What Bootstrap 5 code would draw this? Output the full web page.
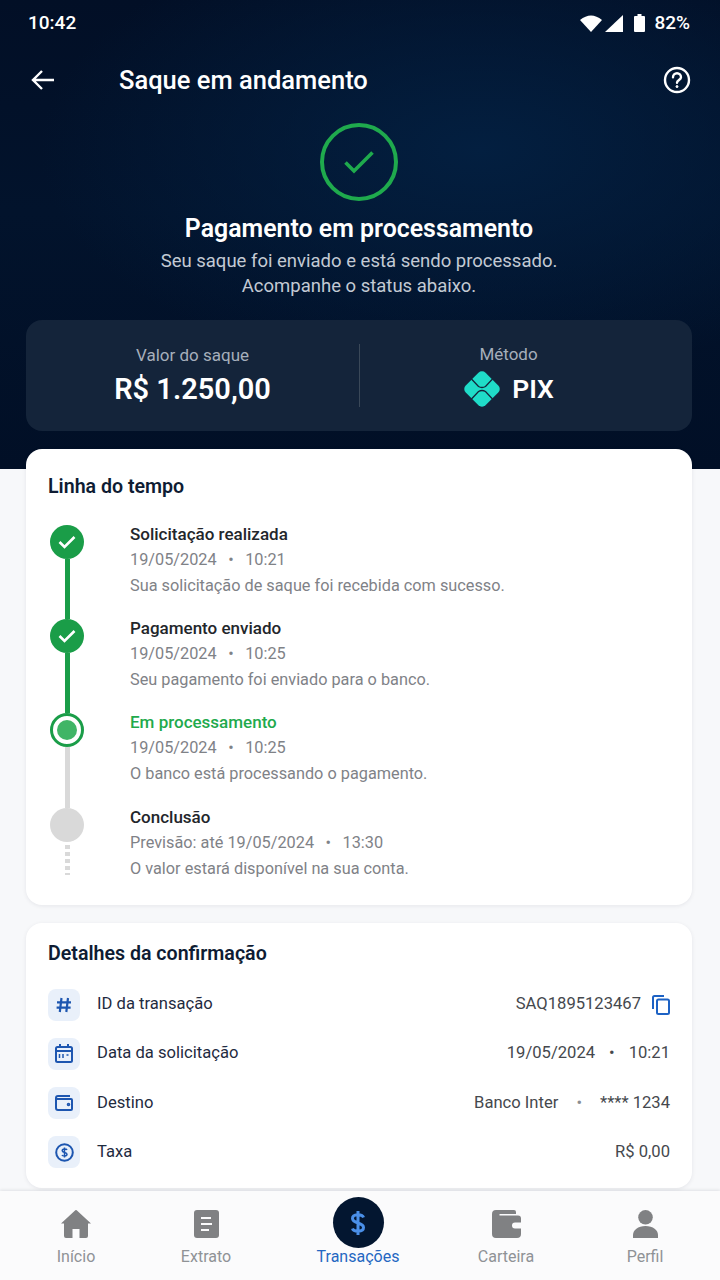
<!DOCTYPE html>
<html lang="pt-BR">
<head>
  <meta charset="utf-8">
  <meta name="viewport" content="width=device-width">
  <title>Saque em andamento</title>
  <link href="https://cdn.jsdelivr.net/npm/bootstrap@5.3.2/dist/css/bootstrap.min.css" rel="stylesheet" type="text/css" />
  <style>
    body { font-family: Roboto, "Liberation Sans", sans-serif; background: #f7f8fa; height: 1280px; overflow: hidden; }
    .hero-area { height: 469px; color: #fff; padding: 0 28px 0 26px;
      background: radial-gradient(ellipse 440px 230px at 480px 150px, #031f40 0%, rgba(3,28,56,0) 100%), linear-gradient(180deg, #020f26 0%, #02132c 45%, #010f26 100%); }
    .status-row { height: 46px; font-size: 19px; font-weight: 500; }
    .status-time { margin-left: 2px; }
    .status-icons { gap: 3px; margin-right: 2px; }
    .status-pct { margin-left: 6px; }
    .top-row { height: 48px; margin-top: 10px; }
    .top-title { font-size: 25.5px; font-weight: 500; margin-left: 64px; }
    .help-icon { margin-right: 1px; }
    .check-ring { width: 78px; height: 78px; border: 4px solid #1faa4d; border-radius: 50%; margin-top: 19px; }
    .hero-title { font-size: 24.9px; font-weight: 600; line-height: 30px; margin-top: 13px; }
    .hero-sub { font-size: 18.5px; line-height: 25px; color: #c3cad4; margin-top: 5px; }
    .amount-box { background: #14243a; border-radius: 16px; height: 111px; margin-top: 21px; }
    .amount-col { width: 333px; }
    .amount-split { height: 63px; border-left: 1px solid #3a4858; padding-right: 35px; }
    .amount-label { font-size: 17px; line-height: 20px; color: #a6afbb; }
    .amount-value { font-size: 29px; font-weight: 600; line-height: 34px; margin-top: 7px; }
    .pix-value { font-size: 26.5px; margin-top: 6px; gap: 11px; }
    .sheet { margin: -20px 28px 0 26px; background: #fff; border-radius: 16px; box-shadow: 0 1px 4px rgba(20,30,50,.08); }
    .sheet-time { height: 456px; padding: 24px 22px 0; }
    .sheet-details { height: 265px; margin-top: 18px; padding: 17px 22px 0; }
    .sheet-title { font-size: 19.6px; font-weight: 600; line-height: 28px; color: #0e1c33; margin: 0; }
    .step-list { margin-top: 24px; }
    .step-item { display: flex; height: 94.2px; }
    .step-track { width: 38px; margin-right: 44px; display: flex; flex-direction: column; align-items: center; }
    .step-dot { width: 34px; height: 34px; border-radius: 50%; flex: none; display: flex; align-items: center; justify-content: center; }
    .dot-done { background: #1a9d48; }
    .dot-now { border: 3px solid #1a9d48; background: #fff; }
    .dot-now span { width: 20px; height: 20px; border-radius: 50%; background: #40b566; }
    .dot-wait { background: #d9d9d9; }
    .step-line { width: 5px; flex: 1; background: #1a9d48; }
    .line-gray { background: #d9d9d9; }
    .line-dash { flex: none; height: 30px; margin-top: 3px; background: repeating-linear-gradient(180deg, #d9d9d9 0 4px, transparent 4px 7px); }
    .step-text { margin-top: -3px; font-size: 16.3px; line-height: 25px; color: #7f8287; }
    .step-name { font-size: 17px; font-weight: 500; color: #23262b; }
    .step-desc { line-height: 27px; }
    .step-now { color: #1faa4d; }
    .step-sep { margin: 0 11.5px; }
    .info-first { margin-top: 12px; }
    .info-row { height: 49.2px; font-size: 16.6px; color: #1f2b3f; }
    .info-icon { width: 32px; height: 32px; background: #e9f0fa; border-radius: 8px; margin-right: 17px; }
    .info-value { color: #45484d; }
    .copy-icon { margin-left: 11px; }
    .sep { margin: 0 14px; }
    .sep-wide { margin: 0 18px; color: #8a8d91; }
    .tab-bar { display: grid; grid-template-columns: 152px 108px 196px 100px 164px; height: 89px; background: #fbfbfc; box-shadow: 0 -1px 3px rgba(20,30,50,.1); font-size: 16px; color: #8f9296; }
    .tab-link { display: flex; flex-direction: column; align-items: center; }
    .tab-link svg { margin-top: 19px; }
    .tab-perfil { padding-left: 14px; }
    .tab-label { line-height: 20px; margin-top: 9px; }
    .tab-on { color: #2467c2; }
    .tab-bubble { width: 51px; height: 51px; border-radius: 50%; background: #031630; margin-top: 6px; margin-bottom: -10px; }
    .tab-bubble svg { margin-top: 0; }
  </style>
</head>
<body class="d-flex flex-column">
  <div class="hero-area">
    <div class="status-row d-flex align-items-center justify-content-between">
      <span class="status-time">10:42</span>
      <span class="status-icons d-flex align-items-center">
        <svg width="22" height="17" viewBox="0 0 22 17"><path d="M0 5 Q11 -4 22 5 L11 17Z" fill="#fff"/></svg>
        <svg width="18" height="17" viewBox="0 0 18 17"><path d="M18 0V17H0Z" fill="#fff"/></svg>
        <svg class="ms-2" width="11" height="18" viewBox="0 0 11 18"><path d="M3.500 0h4v2H10a1 1 0 0 1 1 1v14a1 1 0 0 1-1 1H1a1 1 0 0 1-1-1V3a1 1 0 0 1 1-1h2.500z" fill="#fff"/></svg>
        <span class="status-pct">82%</span>
      </span>
    </div>
    <div class="top-row d-flex align-items-center">
      <svg class="ms-1" width="25" height="24" viewBox="0 0 25 24" fill="none" stroke="#fff" stroke-width="2.4"><path d="M24 12H3M12 3l-9 9 9 9"/></svg>
      <span class="top-title flex-grow-1">Saque em andamento</span>
      <svg class="help-icon" width="28" height="28" viewBox="0 0 28 28" fill="none" stroke="#fff" stroke-width="2.4"><circle cx="14" cy="14" r="12"/><path d="M10 11.200a4 4 0 0 1 8 0c0 2.600-4 3-4 5.600" stroke-linecap="round"/><circle cx="14" cy="20.600" r="1" fill="#fff" stroke-width="1"/></svg>
    </div>
    <div class="d-flex flex-column align-items-center text-center">
      <div class="check-ring d-flex align-items-center justify-content-center">
        <svg width="30" height="23" viewBox="0 0 30 23" fill="none" stroke="#1faa4d" stroke-width="3.600"><path d="M1.500 11.500l8.500 8.500L28.500 1.500"/></svg>
      </div>
      <div class="hero-title">Pagamento em processamento</div>
      <div class="hero-sub">Seu saque foi enviado e está sendo processado.<br>Acompanhe o status abaixo.</div>
    </div>
    <div class="amount-box d-flex align-items-center text-center">
      <div class="amount-col">
        <div class="amount-label">Valor do saque</div>
        <div class="amount-value">R$ 1.250,00</div>
      </div>
      <div class="amount-col amount-split">
        <div class="amount-label">Método</div>
        <div class="amount-value pix-value d-flex align-items-center justify-content-center">
          <svg width="38" height="38" viewBox="0 0 38 38"><rect x="5" y="5" width="28" height="28" rx="5" transform="rotate(45 19 19)" fill="#1fdcc8"/><path d="M8.500 9l7 7.500q3.500 2 7 0l7-7.500M8.500 29l7-7.500q3.500-2 7 0l7 7.500" fill="none" stroke="#14243a" stroke-width="1.300"/></svg>
          <span>PIX</span>
        </div>
      </div>
    </div>
  </div>

  <div class="sheet sheet-time">
    <h2 class="sheet-title">Linha do tempo</h2>
    <div class="step-list">
      <div class="step-item">
        <div class="step-track">
          <div class="step-dot dot-done"><svg width="18" height="14" viewBox="0 0 18 14" fill="none" stroke="#fff" stroke-width="2.600"><path d="M1.500 7l5 5L16.500 2"/></svg></div>
          <div class="step-line"></div>
        </div>
        <div class="step-text">
          <div class="step-name">Solicitação realizada</div>
          <div>19/05/2024<span class="step-sep">•</span>10:21</div>
          <div class="step-desc">Sua solicitação de saque foi recebida com sucesso.</div>
        </div>
      </div>
      <div class="step-item">
        <div class="step-track">
          <div class="step-dot dot-done"><svg width="18" height="14" viewBox="0 0 18 14" fill="none" stroke="#fff" stroke-width="2.600"><path d="M1.500 7l5 5L16.500 2"/></svg></div>
          <div class="step-line"></div>
        </div>
        <div class="step-text">
          <div class="step-name">Pagamento enviado</div>
          <div>19/05/2024<span class="step-sep">•</span>10:25</div>
          <div class="step-desc">Seu pagamento foi enviado para o banco.</div>
        </div>
      </div>
      <div class="step-item">
        <div class="step-track">
          <div class="step-dot dot-now"><span></span></div>
          <div class="step-line line-gray"></div>
        </div>
        <div class="step-text">
          <div class="step-name step-now">Em processamento</div>
          <div>19/05/2024<span class="step-sep">•</span>10:25</div>
          <div class="step-desc">O banco está processando o pagamento.</div>
        </div>
      </div>
      <div class="step-item">
        <div class="step-track">
          <div class="step-dot dot-wait"></div>
          <div class="step-line line-gray line-dash"></div>
        </div>
        <div class="step-text">
          <div class="step-name">Conclusão</div>
          <div>Previsão: até 19/05/2024<span class="step-sep">•</span>13:30</div>
          <div class="step-desc">O valor estará disponível na sua conta.</div>
        </div>
      </div>
    </div>
  </div>

  <div class="sheet sheet-details">
    <h2 class="sheet-title">Detalhes da confirmação</h2>
    <div class="info-row info-first d-flex align-items-center">
      <span class="info-icon d-flex align-items-center justify-content-center">
        <svg width="16" height="16" viewBox="0 0 16 16" fill="none" stroke="#1d56b0" stroke-width="2.200"><path d="M5.500 1L3.800 15M12 1l-1.700 14M1 5.300h14M.6 10.700h14"/></svg>
      </span>
      <span>ID da transação</span>
      <span class="info-value ms-auto">SAQ1895123467</span>
      <svg class="copy-icon" width="18" height="20" viewBox="0 0 18 20" fill="none" stroke="#1d62c4" stroke-width="2"><rect x="5" y="4.500" width="12" height="14.500" rx="1.500"/><path d="M1 14V2.500A1.500 1.500 0 0 1 2.500 1H12"/></svg>
    </div>
    <div class="info-row d-flex align-items-center">
      <span class="info-icon d-flex align-items-center justify-content-center">
        <svg width="18" height="19" viewBox="0 0 18 19" fill="none" stroke="#1d56b0" stroke-width="2"><rect x="1" y="3" width="16" height="15" rx="1.500"/><path d="M1 7h16M5 0v4M13 0v4"/><path d="M4.500 10v4M8 10v4M11.500 11h2" stroke-width="1.500"/></svg>
      </span>
      <span>Data da solicitação</span>
      <span class="info-value ms-auto">19/05/2024<span class="sep">•</span>10:21</span>
    </div>
    <div class="info-row d-flex align-items-center">
      <span class="info-icon d-flex align-items-center justify-content-center">
        <svg width="18" height="16" viewBox="0 0 18 16" fill="none" stroke="#1d56b0" stroke-width="2"><path d="M15 1H3a2 2 0 0 0-2 2v10a2 2 0 0 0 2 2h13a1 1 0 0 0 1-1V5a1 1 0 0 0-1-1H1"/><circle cx="13.500" cy="9.500" r=".8"/></svg>
      </span>
      <span>Destino</span>
      <span class="info-value ms-auto">Banco Inter<span class="sep-wide">•</span>**** 1234</span>
    </div>
    <div class="info-row d-flex align-items-center">
      <span class="info-icon d-flex align-items-center justify-content-center">
        <svg width="19" height="19" viewBox="0 0 19 19" fill="none" stroke="#1d56b0" stroke-width="2"><circle cx="9.500" cy="9.500" r="8.300"/><path d="M12 6.800c-.5-1-4.800-1.500-4.800.9 0 2.400 4.800 1.200 4.800 3.600 0 2.400-4.500 1.900-5 .7M9.500 4.500v10" stroke-width="1.500"/></svg>
      </span>
      <span>Taxa</span>
      <span class="info-value ms-auto">R$ 0,00</span>
    </div>
  </div>

  <nav class="tab-bar mt-auto">
    <div class="tab-link">
      <svg width="30" height="28" viewBox="0 0 30 28"><path d="M15 0a1 1 0 0 1 .7.3L30 13.500h-3V26a2 2 0 0 1-2 2h-6.500v-9h-7v9H5a2 2 0 0 1-2-2V13.500H0L14.300.3A1 1 0 0 1 15 0z" fill="#808183"/></svg>
      <span class="tab-label">Início</span>
    </div>
    <div class="tab-link">
      <svg width="25" height="28" viewBox="0 0 25 28"><rect width="25" height="28" rx="3" fill="#808183"/><path d="M7 8h10M7 14h11M7 20h8" stroke="#fbfbfc" stroke-width="2"/></svg>
      <span class="tab-label">Extrato</span>
    </div>
    <div class="tab-link">
      <span class="tab-bubble d-flex align-items-center justify-content-center">
        <svg width="16" height="26" viewBox="0 0 16 26" fill="none" stroke="#4a8fe8" stroke-width="3"><path d="M13.500 7.500c-1-3.500-11-4-11 1 0 5.500 11 3.500 11 9 0 5-10 4.500-11 1M8 1v24"/></svg>
      </span>
      <span class="tab-label tab-on">Transações</span>
    </div>
    <div class="tab-link">
      <svg width="29" height="28" viewBox="0 0 29 28"><path d="M4 0h18a2 2 0 0 1 2 2v2H7.500v1.500H26a3 3 0 0 1 3 3v4h-6a2.800 2.800 0 0 0 0 6h6V24a4 4 0 0 1-4 4H4a4 4 0 0 1-4-4V4a4 4 0 0 1 4-4z" fill="#808183"/></svg>
      <span class="tab-label">Carteira</span>
    </div>
    <div class="tab-link tab-perfil">
      <svg width="25" height="28" viewBox="0 0 25 28" fill="#808183"><circle cx="12.500" cy="7.300" r="7.300"/><path d="M0 28v-3c0-5 5-9 12.500-9s12.500 4 12.500 9v3z"/></svg>
      <span class="tab-label">Perfil</span>
    </div>
  </nav>
</body>
</html>
